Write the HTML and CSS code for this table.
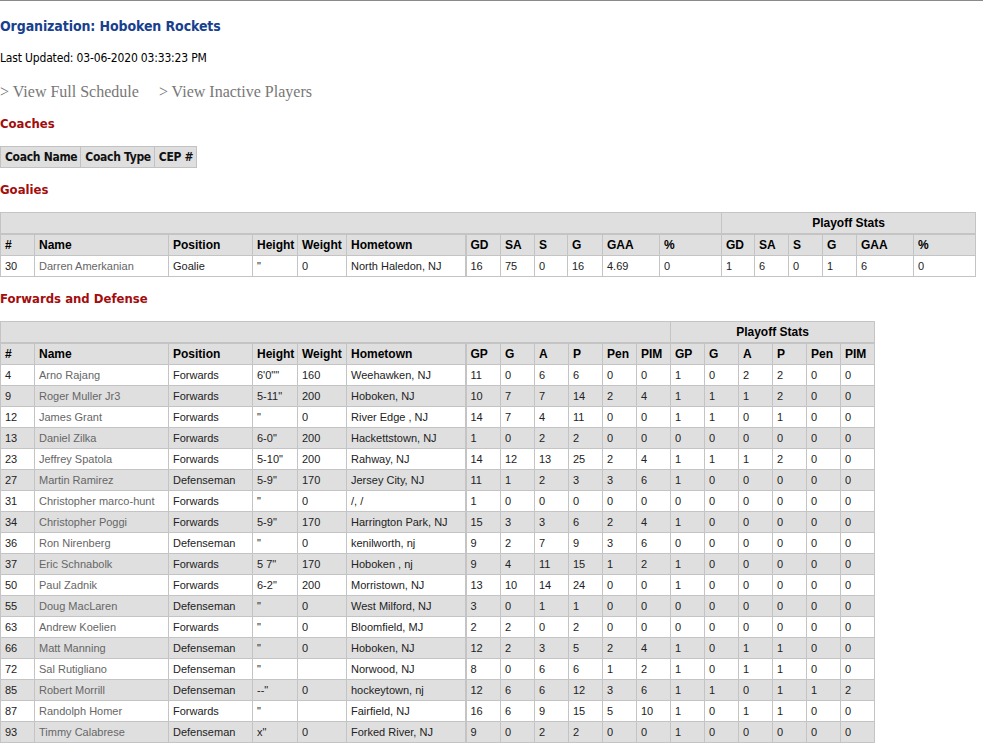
FILE: index.html
```html
<!DOCTYPE html>
<html>
<head>
<meta charset="utf-8">
<title>Organization: Hoboken Rockets</title>
<link rel="stylesheet" href="styles.css">
</head>
<body>
<div class="page">
  <h1 class="org-title">Organization: Hoboken Rockets</h1>
  <div class="updated">Last Updated: 03-06-2020 03:33:23 PM</div>
  <div class="links">
    <a class="nav-link" href="#">&gt; View Full Schedule</a>
    <a class="nav-link" href="#">&gt; View Inactive Players</a>
  </div>

  <h2 class="section">Coaches</h2>
  <table class="coaches">
    <tr><th>Coach Name</th><th>Coach Type</th><th>CEP #</th></tr>
  </table>

  <h2 class="section">Goalies</h2>
  <table class="roster goalies">
    <colgroup>
      <col class="c-num"><col class="c-name"><col class="c-pos"><col class="c-ht"><col class="c-wt"><col class="c-town">
      <col class="g-gd"><col class="g-sa"><col class="g-s"><col class="g-g"><col class="g-gaa"><col class="g-pct">
      <col class="p-gd"><col class="p-sa"><col class="p-s"><col class="p-g"><col class="p-gaa"><col class="p-pct">
    </colgroup>
    <tr class="group"><th colspan="12"></th><th colspan="6">Playoff Stats</th></tr>
    <tr class="head">
      <th>#</th><th>Name</th><th>Position</th><th>Height</th><th>Weight</th><th>Hometown</th>
      <th class="split">GD</th><th>SA</th><th>S</th><th>G</th><th>GAA</th><th>%</th>
      <th>GD</th><th>SA</th><th>S</th><th>G</th><th>GAA</th><th>%</th>
    </tr>
    <tr>
      <td>30</td><td><a class="player" href="#">Darren Amerkanian</a></td><td>Goalie</td><td>"</td><td>0</td><td>North Haledon, NJ</td>
      <td class="split">16</td><td>75</td><td>0</td><td>16</td><td>4.69</td><td>0</td>
      <td>1</td><td>6</td><td>0</td><td>1</td><td>6</td><td>0</td>
    </tr>
  </table>

  <h2 class="section">Forwards and Defense</h2>
  <table class="roster skaters">
    <colgroup>
      <col class="c-num"><col class="c-name"><col class="c-pos"><col class="c-ht"><col class="c-wt"><col class="c-town">
      <col class="s-gp"><col class="s-col"><col class="s-col"><col class="s-col"><col class="s-col"><col class="s-col">
      <col class="s-col"><col class="s-col"><col class="s-col"><col class="s-col"><col class="s-col"><col class="s-col">
    </colgroup>
    <tr class="group"><th colspan="12"></th><th colspan="6">Playoff Stats</th></tr>
    <tr class="head">
      <th>#</th><th>Name</th><th>Position</th><th>Height</th><th>Weight</th><th>Hometown</th>
      <th class="split">GP</th><th>G</th><th>A</th><th>P</th><th>Pen</th><th>PIM</th>
      <th>GP</th><th>G</th><th>A</th><th>P</th><th>Pen</th><th>PIM</th>
    </tr>
    <tr><td>4</td><td><a class="player" href="#">Arno Rajang</a></td><td>Forwards</td><td>6'0""</td><td>160</td><td>Weehawken, NJ</td><td class="split">11</td><td>0</td><td>6</td><td>6</td><td>0</td><td>0</td><td>1</td><td>0</td><td>2</td><td>2</td><td>0</td><td>0</td></tr>
    <tr class="alt"><td>9</td><td><a class="player" href="#">Roger Muller Jr3</a></td><td>Forwards</td><td>5-11"</td><td>200</td><td>Hoboken, NJ</td><td class="split">10</td><td>7</td><td>7</td><td>14</td><td>2</td><td>4</td><td>1</td><td>1</td><td>1</td><td>2</td><td>0</td><td>0</td></tr>
    <tr><td>12</td><td><a class="player" href="#">James Grant</a></td><td>Forwards</td><td>"</td><td>0</td><td>River Edge , NJ</td><td class="split">14</td><td>7</td><td>4</td><td>11</td><td>0</td><td>0</td><td>1</td><td>1</td><td>0</td><td>1</td><td>0</td><td>0</td></tr>
    <tr class="alt"><td>13</td><td><a class="player" href="#">Daniel Zilka</a></td><td>Forwards</td><td>6-0"</td><td>200</td><td>Hackettstown, NJ</td><td class="split">1</td><td>0</td><td>2</td><td>2</td><td>0</td><td>0</td><td>0</td><td>0</td><td>0</td><td>0</td><td>0</td><td>0</td></tr>
    <tr><td>23</td><td><a class="player" href="#">Jeffrey Spatola</a></td><td>Forwards</td><td>5-10"</td><td>200</td><td>Rahway, NJ</td><td class="split">14</td><td>12</td><td>13</td><td>25</td><td>2</td><td>4</td><td>1</td><td>1</td><td>1</td><td>2</td><td>0</td><td>0</td></tr>
    <tr class="alt"><td>27</td><td><a class="player" href="#">Martin Ramirez</a></td><td>Defenseman</td><td>5-9"</td><td>170</td><td>Jersey City, NJ</td><td class="split">11</td><td>1</td><td>2</td><td>3</td><td>3</td><td>6</td><td>1</td><td>0</td><td>0</td><td>0</td><td>0</td><td>0</td></tr>
    <tr><td>31</td><td><a class="player" href="#">Christopher marco-hunt</a></td><td>Forwards</td><td>"</td><td>0</td><td>/, /</td><td class="split">1</td><td>0</td><td>0</td><td>0</td><td>0</td><td>0</td><td>0</td><td>0</td><td>0</td><td>0</td><td>0</td><td>0</td></tr>
    <tr class="alt"><td>34</td><td><a class="player" href="#">Christopher Poggi</a></td><td>Forwards</td><td>5-9"</td><td>170</td><td>Harrington Park, NJ</td><td class="split">15</td><td>3</td><td>3</td><td>6</td><td>2</td><td>4</td><td>1</td><td>0</td><td>0</td><td>0</td><td>0</td><td>0</td></tr>
    <tr><td>36</td><td><a class="player" href="#">Ron Nirenberg</a></td><td>Defenseman</td><td>"</td><td>0</td><td>kenilworth, nj</td><td class="split">9</td><td>2</td><td>7</td><td>9</td><td>3</td><td>6</td><td>0</td><td>0</td><td>0</td><td>0</td><td>0</td><td>0</td></tr>
    <tr class="alt"><td>37</td><td><a class="player" href="#">Eric Schnabolk</a></td><td>Forwards</td><td>5 7"</td><td>170</td><td>Hoboken , nj</td><td class="split">9</td><td>4</td><td>11</td><td>15</td><td>1</td><td>2</td><td>1</td><td>0</td><td>0</td><td>0</td><td>0</td><td>0</td></tr>
    <tr><td>50</td><td><a class="player" href="#">Paul Zadnik</a></td><td>Forwards</td><td>6-2"</td><td>200</td><td>Morristown, NJ</td><td class="split">13</td><td>10</td><td>14</td><td>24</td><td>0</td><td>0</td><td>1</td><td>0</td><td>0</td><td>0</td><td>0</td><td>0</td></tr>
    <tr class="alt"><td>55</td><td><a class="player" href="#">Doug MacLaren</a></td><td>Defenseman</td><td>"</td><td>0</td><td>West Milford, NJ</td><td class="split">3</td><td>0</td><td>1</td><td>1</td><td>0</td><td>0</td><td>0</td><td>0</td><td>0</td><td>0</td><td>0</td><td>0</td></tr>
    <tr><td>63</td><td><a class="player" href="#">Andrew Koelien</a></td><td>Forwards</td><td>"</td><td>0</td><td>Bloomfield, MJ</td><td class="split">2</td><td>2</td><td>0</td><td>2</td><td>0</td><td>0</td><td>0</td><td>0</td><td>0</td><td>0</td><td>0</td><td>0</td></tr>
    <tr class="alt"><td>66</td><td><a class="player" href="#">Matt Manning</a></td><td>Defenseman</td><td>"</td><td>0</td><td>Hoboken, NJ</td><td class="split">12</td><td>2</td><td>3</td><td>5</td><td>2</td><td>4</td><td>1</td><td>0</td><td>1</td><td>1</td><td>0</td><td>0</td></tr>
    <tr><td>72</td><td><a class="player" href="#">Sal Rutigliano</a></td><td>Defenseman</td><td>"</td><td></td><td>Norwood, NJ</td><td class="split">8</td><td>0</td><td>6</td><td>6</td><td>1</td><td>2</td><td>1</td><td>0</td><td>1</td><td>1</td><td>0</td><td>0</td></tr>
    <tr class="alt"><td>85</td><td><a class="player" href="#">Robert Morrill</a></td><td>Defenseman</td><td>--"</td><td>0</td><td>hockeytown, nj</td><td class="split">12</td><td>6</td><td>6</td><td>12</td><td>3</td><td>6</td><td>1</td><td>1</td><td>0</td><td>1</td><td>1</td><td>2</td></tr>
    <tr><td>87</td><td><a class="player" href="#">Randolph Homer</a></td><td>Forwards</td><td>"</td><td></td><td>Fairfield, NJ</td><td class="split">16</td><td>6</td><td>9</td><td>15</td><td>5</td><td>10</td><td>1</td><td>0</td><td>1</td><td>1</td><td>0</td><td>0</td></tr>
    <tr class="alt"><td>93</td><td><a class="player" href="#">Timmy Calabrese</a></td><td>Defenseman</td><td>x"</td><td>0</td><td>Forked River, NJ</td><td class="split">9</td><td>0</td><td>2</td><td>2</td><td>0</td><td>0</td><td>1</td><td>0</td><td>0</td><td>0</td><td>0</td><td>0</td></tr>
  </table>
</div>
</body>
</html>
```
FILE: styles.css
```css
html, body {
  margin: 0;
  padding: 0;
  background: #ffffff;
}
body {
  border-top: 1px solid #8a8a8a;
  font-family: "DejaVu Sans Condensed", "DejaVu Sans", sans-serif;
  color: #000;
}
.page {
  padding-top: 16px;
  padding-bottom: 20px;
}
.org-title {
  margin: 0;
  font-size: 14px;
  line-height: 18px;
  font-weight: bold;
  color: #17408f;
  letter-spacing: -0.1px;
}
.updated {
  margin-top: 15px;
  font-size: 12px;
  line-height: 16px;
  color: #000;
  letter-spacing: -0.17px;
}
.links {
  margin-top: 16px;
  font-family: "Liberation Serif", "Times New Roman", serif;
  font-size: 16px;
  line-height: 20px;
  display: flex;
  gap: 20px;
}
.nav-link {
  color: #777;
  text-decoration: none;
}
.section {
  margin: 14px 0;
  font-size: 13px;
  line-height: 16px;
  font-weight: bold;
  color: #a30d0d;
}

/* coaches */
.coaches {
  border-collapse: collapse;
}
.coaches th {
  background: #dfdfdf;
  border: 1px solid #c2c2c2;
  font-family: "DejaVu Sans Condensed", "DejaVu Sans", sans-serif;
  font-size: 12px;
  font-weight: bold;
  line-height: 14px;
  padding: 3px 3px 3px 4px;
  letter-spacing: -0.3px;
  text-align: left;
  color: #111;
}

/* roster tables */
.roster {
  border-collapse: collapse;
  table-layout: fixed;
  font-family: "Liberation Sans", Arial, sans-serif;
}
.goalies { width: 975px; }
.skaters { width: 875px; }

.c-num { width: 34px; }
.c-name { width: 134px; }
.c-pos { width: 84px; }
.c-ht { width: 45px; }
.c-wt { width: 49px; }
.c-town { width: 119px; }
.g-gd { width: 35px; }
.g-sa { width: 34px; }
.g-s { width: 33px; }
.g-g { width: 35px; }
.g-gaa { width: 57px; }
.g-pct { width: 62px; }
.p-gd { width: 33px; }
.p-sa { width: 34px; }
.p-s { width: 34px; }
.p-g { width: 34px; }
.p-gaa { width: 57px; }
.p-pct { width: 62px; }
.s-gp { width: 35px; }
.s-col { width: 34px; }

.roster th,
.roster td {
  border: 1px solid #c4c4c4;
  padding: 3px 4px;
  text-align: left;
  white-space: nowrap;
  overflow: hidden;
  height: 14px;
  line-height: 14px;
}
.roster th {
  background: #dfdfdf;
  font-size: 12px;
  font-weight: bold;
  color: #000;
}
.roster .group th {
  text-align: center;
  border-bottom: 2px solid #c4c4c4;
}
.roster td {
  font-size: 11px;
  color: #222;
  background: #fff;
}
.roster tr.alt td {
  background: #dfdfdf;
}
.roster .split {
  border-left: 2px solid #c4c4c4;
}
.player {
  color: #666;
  text-decoration: none;
}
```
